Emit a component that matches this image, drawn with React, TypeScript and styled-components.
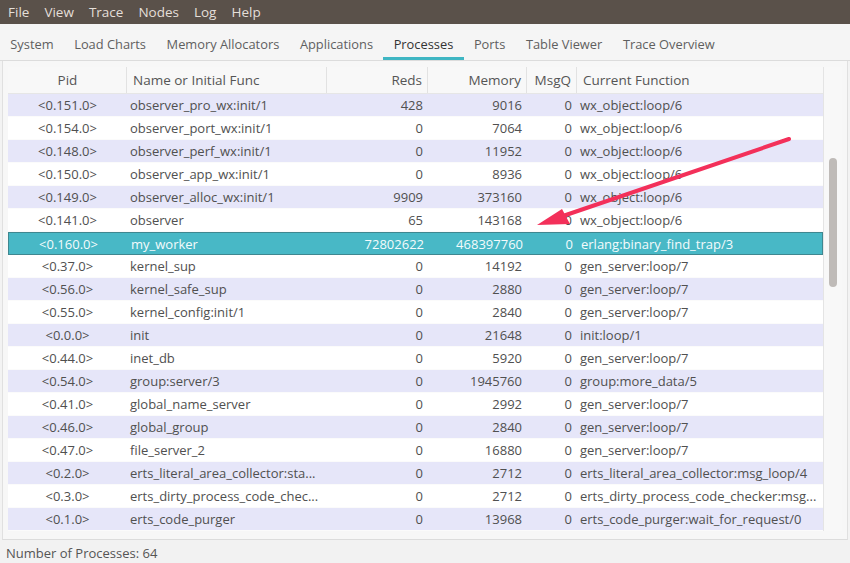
import React from "react";
import styled, { createGlobalStyle, css } from "styled-components";

const Global = createGlobalStyle`
  html, body { margin: 0; padding: 0; background: #f3f3f3; }
  body { font-family: "Open Sans", "Noto Sans", sans-serif; }
  * { box-sizing: border-box; }
`;

const Shell = styled.div`
  position: relative;
  width: 850px;
  height: 563px;
  display: flex;
  flex-direction: column;
  background: #f3f3f3;
  overflow: hidden;
`;

const MenuBar = styled.div`
  height: 24px;
  background: #5a514a;
  display: flex;
  align-items: center;
  padding-left: 2px;
`;

const MenuItem = styled.span`
  color: #e4dfd9;
  font-size: 13.5px;
  padding: 0 6px;
  margin-right: 3px;
  line-height: 24px;
`;

const TabBar = styled.div`
  height: 37px;
  display: flex;
  align-items: stretch;
  background: #f5f5f5;
  border-bottom: 1px solid #dcdcdc;
`;

const Tab = styled.div<{ $active?: boolean }>`
  padding: 7px 10.3px 0 10.3px;
  display: flex;
  align-items: center;
  font-size: 12.85px;
  color: #5f5f5f;
  border-bottom: 3px solid transparent;
  ${(p) =>
    p.$active &&
    css`
      color: #333;
      border-bottom-color: #3fb6c3;
    `}
`;

const Panel = styled.div`
  flex: 1;
  margin: 0 2px;
  padding: 6px 5px 8px 5px;
  background: #f7f7f7;
  border-left: 1px solid #e0e0e0;
  border-right: 1px solid #e0e0e0;
  border-bottom: 1px solid #dcdcdc;
  display: flex;
`;

const TableWrap = styled.div`
  flex: 1;
  display: flex;
  flex-direction: column;
  border-right: 1px solid #e4e4e4;
`;

const ScrollTrack = styled.div`
  width: 18px;
  background: #f8f8f8;
  display: flex;
  flex-direction: column;
  padding: 91px 0 0 5px;
`;

const Thumb = styled.div`
  width: 8px;
  height: 129px;
  border-radius: 4px;
  background: #bfbbb8;
`;

const COLS = "119px 200px 101px 99px 50px 1fr";

const HeaderRow = styled.div`
  display: grid;
  grid-template-columns: ${COLS};
  height: 27px;
  background: #f8f8f8;
  border-bottom: 1px solid #e6e6e6;
`;

const HeaderCell = styled.div<{ $align: string }>`
  display: flex;
  align-items: center;
  justify-content: ${(p) => p.$align};
  padding: 0 5px 0 6px;
  font-size: 13.5px;
  color: #555;
  border-right: 1px solid #e2e2e2;
  &:last-child { border-right: none; }
`;

const Row = styled.div<{ $variant: "odd" | "even" | "sel" }>`
  display: grid;
  grid-template-columns: ${COLS};
  height: 23px;
  border-bottom: 1px solid #fbfbfb;
  background: ${(p) =>
    p.$variant === "odd" ? "#e6e6f9" : p.$variant === "sel" ? "#48b8c6" : "#ffffff"};
  color: ${(p) => (p.$variant === "sel" ? "#f4fbfc" : "#505050")};
  ${(p) =>
    p.$variant === "sel" &&
    css`
      border: 1px solid #3f8790;
    `}
`;

const Cell = styled.div<{ $align: string }>`
  display: flex;
  align-items: center;
  justify-content: ${(p) => p.$align};
  padding: ${(p) => (p.$align === "flex-end" ? "0 5px 0 0" : p.$align === "center" ? "0" : "0 0 0 3px")};
  font-size: 13px;
  white-space: nowrap;
  overflow: hidden;
`;

const StatusBar = styled.div`
  height: 23px;
  display: flex;
  align-items: center;
  padding: 2px 0 0 6px;
  font-size: 13px;
  color: #555;
  background: #f2f2f2;
`;

const ArrowLayer = styled.svg`
  position: absolute;
  left: 0;
  top: 0;
  pointer-events: none;
`;

type R = [string, string, string, string, string, string];

const rows: R[] = [
  ["<0.151.0>", "observer_pro_wx:init/1", "428", "9016", "0", "wx_object:loop/6"],
  ["<0.154.0>", "observer_port_wx:init/1", "0", "7064", "0", "wx_object:loop/6"],
  ["<0.148.0>", "observer_perf_wx:init/1", "0", "11952", "0", "wx_object:loop/6"],
  ["<0.150.0>", "observer_app_wx:init/1", "0", "8936", "0", "wx_object:loop/6"],
  ["<0.149.0>", "observer_alloc_wx:init/1", "9909", "373160", "0", "wx_object:loop/6"],
  ["<0.141.0>", "observer", "65", "143168", "0", "wx_object:loop/6"],
  ["<0.160.0>", "my_worker", "72802622", "468397760", "0", "erlang:binary_find_trap/3"],
  ["<0.37.0>", "kernel_sup", "0", "14192", "0", "gen_server:loop/7"],
  ["<0.56.0>", "kernel_safe_sup", "0", "2880", "0", "gen_server:loop/7"],
  ["<0.55.0>", "kernel_config:init/1", "0", "2840", "0", "gen_server:loop/7"],
  ["<0.0.0>", "init", "0", "21648", "0", "init:loop/1"],
  ["<0.44.0>", "inet_db", "0", "5920", "0", "gen_server:loop/7"],
  ["<0.54.0>", "group:server/3", "0", "1945760", "0", "group:more_data/5"],
  ["<0.41.0>", "global_name_server", "0", "2992", "0", "gen_server:loop/7"],
  ["<0.46.0>", "global_group", "0", "2840", "0", "gen_server:loop/7"],
  ["<0.47.0>", "file_server_2", "0", "16880", "0", "gen_server:loop/7"],
  ["<0.2.0>", "erts_literal_area_collector:sta...", "0", "2712", "0", "erts_literal_area_collector:msg_loop/4"],
  ["<0.3.0>", "erts_dirty_process_code_chec...", "0", "2712", "0", "erts_dirty_process_code_checker:msg..."],
  ["<0.1.0>", "erts_code_purger", "0", "13968", "0", "erts_code_purger:wait_for_request/0"],
];

const headers: [string, string][] = [
  ["Pid", "center"],
  ["Name or Initial Func", "flex-start"],
  ["Reds", "flex-end"],
  ["Memory", "flex-end"],
  ["MsgQ", "flex-end"],
  ["Current Function", "flex-start"],
];

const menus = ["File", "View", "Trace", "Nodes", "Log", "Help"];
const tabs = [
  "System",
  "Load Charts",
  "Memory Allocators",
  "Applications",
  "Processes",
  "Ports",
  "Table Viewer",
  "Trace Overview",
];

export default function App() {
  return (
    <Shell>
      <Global />
      <MenuBar>
        {menus.map((m) => (
          <MenuItem key={m}>{m}</MenuItem>
        ))}
      </MenuBar>
      <TabBar>
        {tabs.map((t) => (
          <Tab key={t} $active={t === "Processes"}>
            {t}
          </Tab>
        ))}
      </TabBar>
      <Panel>
        <TableWrap>
          <HeaderRow>
            {headers.map(([h, a]) => (
              <HeaderCell key={h} $align={a}>
                {h}
              </HeaderCell>
            ))}
          </HeaderRow>
          {rows.map((r, i) => (
            <Row key={r[0]} $variant={r[1] === "my_worker" ? "sel" : i % 2 === 0 ? "odd" : "even"}>
              {r.map((c, j) => (
                <Cell key={j} $align={headers[j][1]}>
                  {c}
                </Cell>
              ))}
            </Row>
          ))}
        </TableWrap>
        <ScrollTrack>
          <Thumb />
        </ScrollTrack>
      </Panel>
      <StatusBar>Number of Processes: 64</StatusBar>
      <ArrowLayer width="850" height="563" viewBox="0 0 850 563">
        <line x1="789" y1="139" x2="560" y2="217" stroke="#f3305a" strokeWidth="4" strokeLinecap="round" />
        <polygon points="537,225 562,209 570,224" fill="#f3305a" />
      </ArrowLayer>
    </Shell>
  );
}
